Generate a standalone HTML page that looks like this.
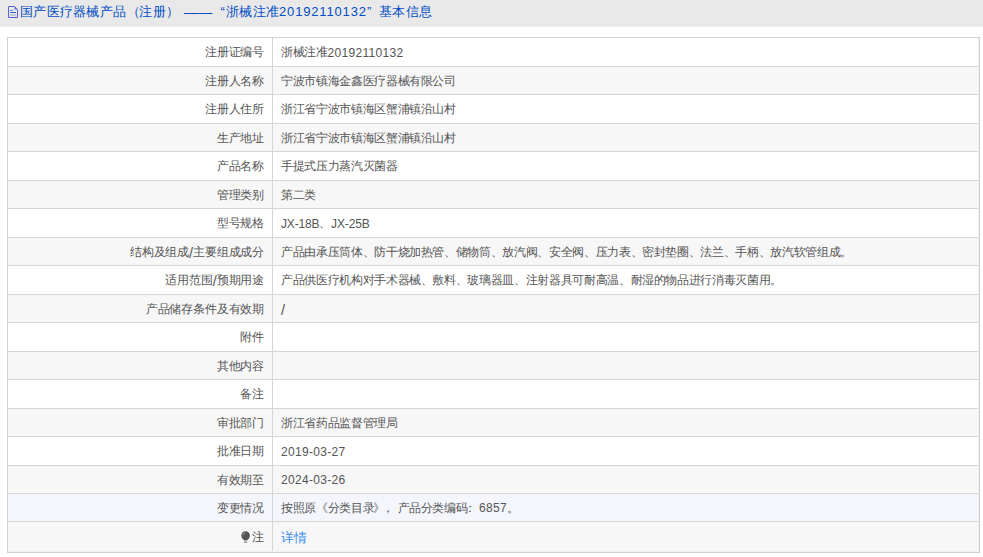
<!DOCTYPE html>
<html><head><meta charset="utf-8">
<style>
html,body{margin:0;padding:0;background:#fff;width:983px;height:557px;overflow:hidden;position:relative;font-family:"Liberation Sans",sans-serif;}
.hd{position:absolute;left:0;top:0;width:983px;height:26px;background:#e9e9e9;border-bottom:1px solid #eceef7;}
.ttl{position:absolute;left:0;top:2px;width:983px;height:20px;font-size:13px;letter-spacing:0.25px;line-height:20px;color:#004cc4;white-space:nowrap;}
.ts{position:absolute;top:0;}
.pl{position:relative;left:1px;}
.pr{position:relative;left:0px;}
.tl{font-size:13px;letter-spacing:0.84px;}
.ico{position:absolute;left:8px;top:6px;}
.tb{position:absolute;left:7px;top:37px;width:971px;height:514px;border:1px solid #d0d0d0;background:#eef0f9;}
.r{position:absolute;left:8px;width:970px;}
.hl{position:absolute;left:8px;width:970px;height:1px;background:#d6d6d6;}
.vl{position:absolute;left:272px;top:38px;width:1px;height:513px;background:#d6d6d6;}
.k{position:absolute;left:0;width:256px;top:1px;bottom:0;font-size:12px;letter-spacing:-0.18px;color:#555;display:flex;align-items:center;justify-content:flex-end;white-space:nowrap;}
.v{position:absolute;left:273px;top:1px;bottom:0;font-size:12px;letter-spacing:-0.35px;color:#555;display:flex;align-items:center;white-space:nowrap;}
.l{font-size:12px;letter-spacing:0.3px;}
.la{font-size:12px;letter-spacing:-0.15px;}
.sl{font-size:14.5px;letter-spacing:0;position:relative;top:0.5px;}
.v a{color:#3d8ef0;font-size:13px;letter-spacing:-0.5px;position:relative;top:1px;}
.bulb{display:block;margin-right:1px;}
</style></head><body>
<div class="hd"><svg class="ico" width="10" height="12" viewBox="0 0 10 12"><path d="M0.5 0.5h6l3 3v8h-9z" fill="none" stroke="#5a5fd4" stroke-width="1"/><path d="M6.5 0.8v2.7h2.7z" fill="#4f6fd8"/><path d="M2 4.5h3" stroke="#6b86d8" stroke-width="1"/><path d="M2 6.5h6" stroke="#3560d0" stroke-width="1"/><path d="M2 9h6" stroke="#aab4d6" stroke-width="1.3"/></svg><div class="ttl"><span class="ts" style="left:20px">国产医疗器械产品<span class="pl">（</span>注册<span class="pr">）</span></span><span class="ts" style="left:184px;font-size:14px">——</span><span class="ts" style="left:220.5px">“</span><span class="ts" style="left:226px">浙械注准</span><span class="ts tl" style="left:279px">20192110132</span><span class="ts" style="left:367px">”</span><span class="ts" style="left:379px">基本信息</span></div></div>
<div class="tb"></div>
<div class="r" style="top:38px;height:28px;background:#ffffff"><div class="k">注册证编号</div><div class="v">浙械注准<span class="l">20192110132</span></div></div>
<div class="hl" style="top:66px"></div>
<div class="r" style="top:67px;height:27px;background:#f7f7f7"><div class="k">注册人名称</div><div class="v">宁波市镇海金鑫医疗器械有限公司</div></div>
<div class="hl" style="top:94px"></div>
<div class="r" style="top:95px;height:28px;background:#ffffff"><div class="k">注册人住所</div><div class="v">浙江省宁波市镇海区蟹浦镇沿山村</div></div>
<div class="hl" style="top:123px"></div>
<div class="r" style="top:124px;height:27px;background:#f7f7f7"><div class="k">生产地址</div><div class="v">浙江省宁波市镇海区蟹浦镇沿山村</div></div>
<div class="hl" style="top:151px"></div>
<div class="r" style="top:152px;height:28px;background:#ffffff"><div class="k">产品名称</div><div class="v">手提式压力蒸汽灭菌器</div></div>
<div class="hl" style="top:180px"></div>
<div class="r" style="top:181px;height:27px;background:#f7f7f7"><div class="k">管理类别</div><div class="v">第二类</div></div>
<div class="hl" style="top:208px"></div>
<div class="r" style="top:209px;height:28px;background:#ffffff"><div class="k">型号规格</div><div class="v"><span class="la">JX-18B</span>、<span class="la">JX-25B</span></div></div>
<div class="hl" style="top:237px"></div>
<div class="r" style="top:238px;height:27px;background:#f7f7f7"><div class="k">结构及组成<span class="sl">/</span>主要组成成分</div><div class="v">产品由承压筒体、防干烧加热管、储物筒、放汽阀、安全阀、压力表、密封垫圈、法兰、手柄、放汽软管组成。</div></div>
<div class="hl" style="top:265px"></div>
<div class="r" style="top:266px;height:28px;background:#ffffff"><div class="k">适用范围<span class="sl">/</span>预期用途</div><div class="v">产品供医疗机构对手术器械、敷料、玻璃器皿、注射器具可耐高温、耐湿的物品进行消毒灭菌用。</div></div>
<div class="hl" style="top:294px"></div>
<div class="r" style="top:295px;height:27px;background:#f7f7f7"><div class="k">产品储存条件及有效期</div><div class="v"><span class="sl">/</span></div></div>
<div class="hl" style="top:322px"></div>
<div class="r" style="top:323px;height:28px;background:#ffffff"><div class="k">附件</div><div class="v"></div></div>
<div class="hl" style="top:351px"></div>
<div class="r" style="top:352px;height:27px;background:#f7f7f7"><div class="k">其他内容</div><div class="v"></div></div>
<div class="hl" style="top:379px"></div>
<div class="r" style="top:380px;height:28px;background:#ffffff"><div class="k">备注</div><div class="v"></div></div>
<div class="hl" style="top:408px"></div>
<div class="r" style="top:409px;height:27px;background:#f7f7f7"><div class="k">审批部门</div><div class="v">浙江省药品监督管理局</div></div>
<div class="hl" style="top:436px"></div>
<div class="r" style="top:437px;height:28px;background:#ffffff"><div class="k">批准日期</div><div class="v"><span class="l">2019-03-27</span></div></div>
<div class="hl" style="top:465px"></div>
<div class="r" style="top:466px;height:27px;background:#f7f7f7"><div class="k">有效期至</div><div class="v"><span class="l">2024-03-26</span></div></div>
<div class="hl" style="top:493px"></div>
<div class="r" style="top:494px;height:27px;background:#f4f6fb"><div class="k">变更情况</div><div class="v">按照原<span style="position:relative;left:0px">《</span>分类目录<span style="position:relative;left:-1px">》</span><span style="position:relative;left:-4px">，</span>产品分类编码<span style="position:relative;left:-3px">：</span><span class="l">6857</span>。</div></div>
<div class="hl" style="top:521px"></div>
<div class="r last" style="top:522px;height:29px;background:#f7f7f7"><div class="k"><svg class="bulb" width="10" height="13" viewBox="0 0 10 13"><circle cx="4.6" cy="4.6" r="4.3" fill="#555"/><path d="M1.2 6.5L3.2 9.4h2.8L8 6.5z" fill="#555"/><rect x="3.2" y="10.6" width="3" height="1" fill="#666"/><path d="M1.9 4.2c0.2-1.2 1-2.1 2.1-2.4" stroke="#b8c4d8" stroke-width="0.8" fill="none"/></svg>注</div><div class="v"><a>详情</a></div></div>
<div class="vl"></div>
</body></html>
